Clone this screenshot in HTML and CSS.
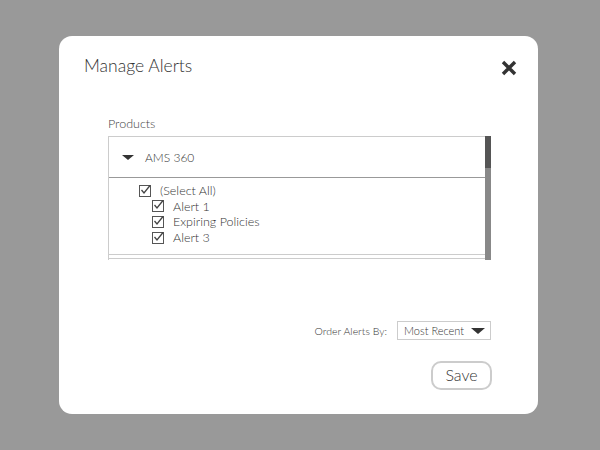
FILE: index.html
```html
<!DOCTYPE html>
<html>
<head>
<meta charset="utf-8">
<link rel="stylesheet" href="styles.css">
</head>
<body>
<div class="modal">
  <div class="head">
    <h1 class="title">Manage Alerts</h1>
    <svg class="close" width="16" height="16" viewBox="0 0 16 16"><path d="M2 2L14 14M14 2L2 14" stroke="#333" stroke-width="3.4" stroke-linecap="butt"/></svg>
  </div>
  <div class="label">Products</div>
  <div class="list">
    <div class="list-inner">
      <div class="group-head">
        <span class="caret"></span>
        <span class="gname">AMS 360</span>
      </div>
      <div class="items">
        <div class="row"><span class="cb"><svg width="12" height="12" viewBox="0 0 12 12"><path d="M2.5 6L5 9L11 1.5" stroke="#444" stroke-width="1.3" fill="none"/></svg></span>(Select All)</div>
        <div class="row sub"><span class="cb"><svg width="12" height="12" viewBox="0 0 12 12"><path d="M2.5 6L5 9L11 1.5" stroke="#444" stroke-width="1.3" fill="none"/></svg></span>Alert 1</div>
        <div class="row sub"><span class="cb"><svg width="12" height="12" viewBox="0 0 12 12"><path d="M2.5 6L5 9L11 1.5" stroke="#444" stroke-width="1.3" fill="none"/></svg></span>Expiring Policies</div>
        <div class="row sub"><span class="cb"><svg width="12" height="12" viewBox="0 0 12 12"><path d="M2.5 6L5 9L11 1.5" stroke="#444" stroke-width="1.3" fill="none"/></svg></span>Alert 3</div>
      </div>
      <div class="group-next"></div>
    </div>
    <div class="scroll"><div class="thumb"></div></div>
  </div>
  <div class="order">
    <span class="order-label">Order Alerts By:</span>
    <div class="select"><span>Most Recent</span><span class="sel-caret"></span></div>
  </div>
  <div class="actions">
    <button class="save">Save</button>
  </div>
</div>
</body>
</html>
```
FILE: styles.css
```css
html, body { margin: 0; padding: 0; }
body {
  width: 600px; height: 450px;
  background: #999999;
  font-family: "Lato", "Open Sans", sans-serif;
  font-weight: 300;
  color: #333;
  padding: 36px 0 0 59px;
  box-sizing: border-box;
}
.modal {
  width: 479px; height: 378px;
  background: #fff;
  border-radius: 13px;
  box-sizing: border-box;
  padding: 0 47px 0 49px;
}
.head {
  display: flex; justify-content: space-between; align-items: center;
  padding: 18px 0 0 0;
  margin-left: -24px; margin-right: -26px;
  height: 24px;
}
.title {
  margin: 0; font-size: 17.5px; font-weight: 300; color: #333; line-height: 24px;
}
.close { display: block; margin-top: 3px; }
.label {
  margin-top: 38px;
  font-size: 12.5px; color: #444; line-height: 16px;
}
.list {
  margin-top: 4px;
  height: 124px;
  display: flex;
  border-left: 1px solid #ccc;
}
.list-inner { flex: 1; display: flex; flex-direction: column; }
.group-head {
  height: 42px; box-sizing: border-box;
  border-top: 1px solid #ccc;
  border-bottom: 1px solid #999;
  display: flex; align-items: center;
  padding-left: 13px;
}
.caret {
  width: 0; height: 0;
  border-left: 6px solid transparent; border-right: 6px solid transparent;
  border-top: 5px solid #333;
  margin-right: 11px;
}
.gname { font-size: 12px; color: #333; }
.items { padding: 5px 0 0 30px; height: 71px; border-bottom: 1px solid #ccc; }
.row {
  display: flex; align-items: center;
  font-size: 12.5px; color: #333; height: 15.6px;
}
.row.sub { padding-left: 13px; }
.cb {
  width: 12px; height: 12px; box-sizing: border-box;
  border: 1px solid #555; margin-right: 9px; display: inline-block; position: relative;
}
.cb svg { position: absolute; left: -1px; top: -2px; }
.group-next { height: 3px; border-bottom: 1px solid #ccc; }
.scroll { width: 6px; background: #888; }
.thumb { height: 32px; background: #555; }
.order {
  margin-top: 61px;
  display: flex; justify-content: flex-end; align-items: center;
}
.order-label { font-size: 10.5px; color: #333; margin-right: 10px; }
.select {
  width: 94px; height: 19px; box-sizing: border-box;
  border: 1px solid #ccc;
  display: flex; align-items: center; justify-content: space-between;
  padding: 0 5px 0 6px;
  font-size: 11px; color: #333;
}
.sel-caret {
  width: 0; height: 0;
  border-left: 7px solid transparent; border-right: 7px solid transparent;
  border-top: 6px solid #333;
}
.actions { display: flex; justify-content: flex-end; margin-top: 21px; }
.save {
  width: 61px; height: 29px;
  border: 2px solid #ccc; border-radius: 10px;
  background: #fff;
  font-family: inherit; font-weight: 300; font-size: 16px; color: #333;
  padding: 0 0 2px 0;
  margin-right: -1px;
}
```
